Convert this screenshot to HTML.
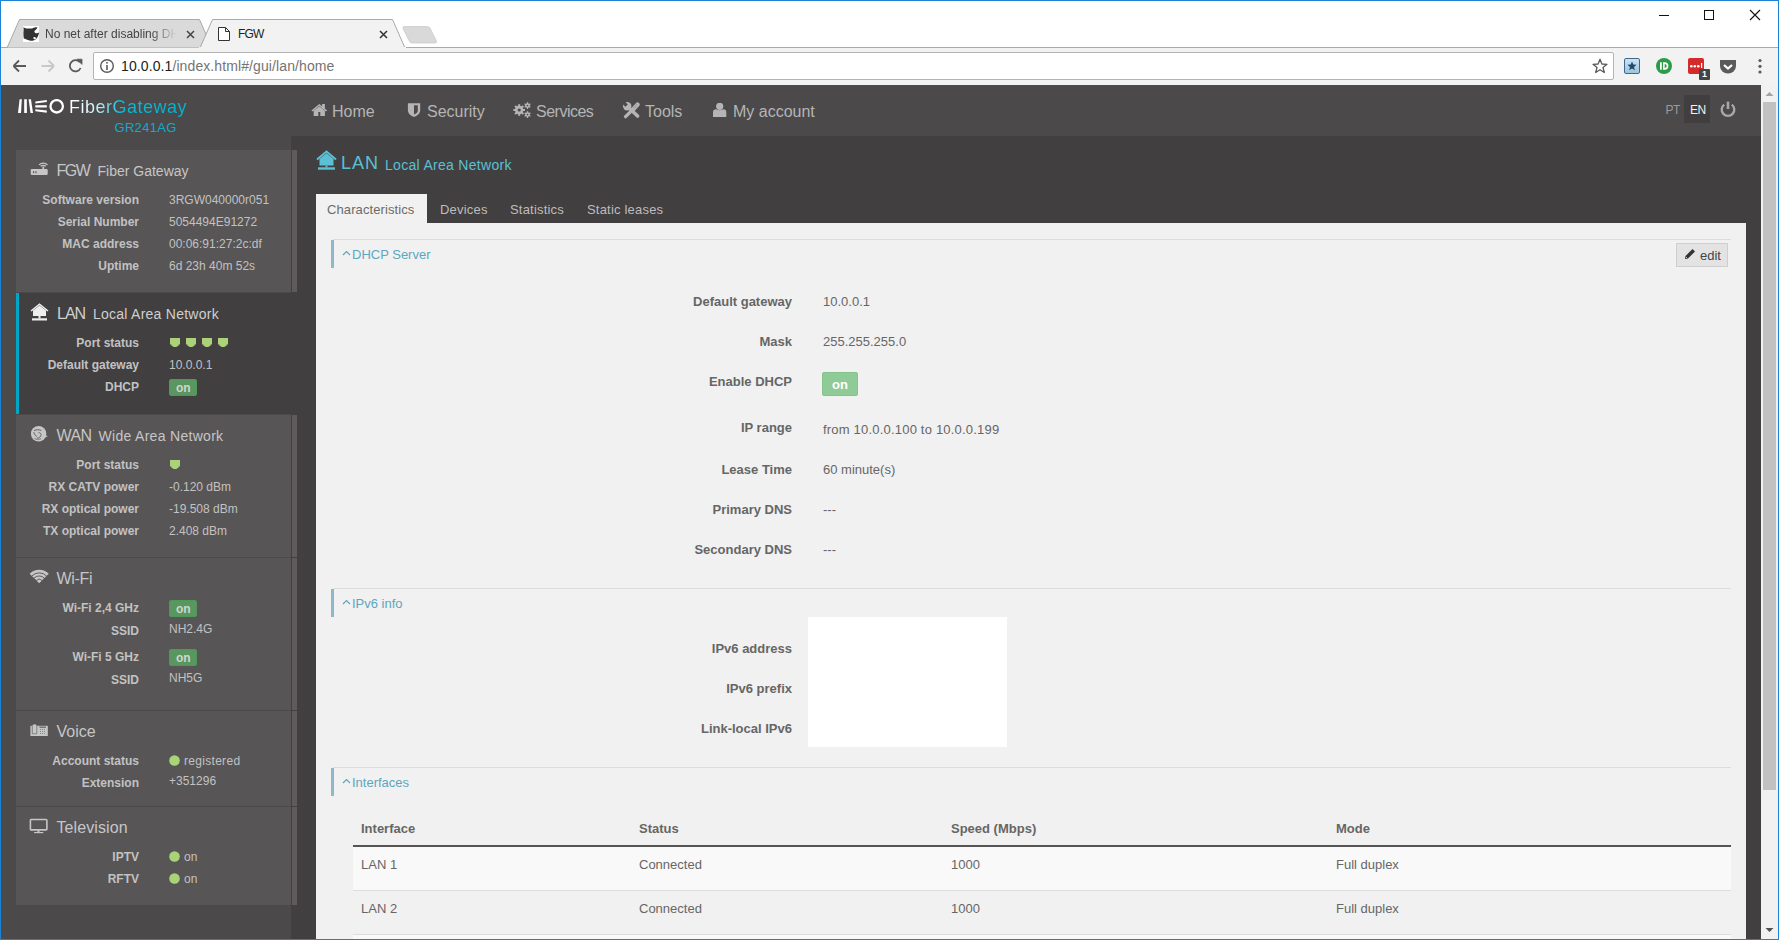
<!DOCTYPE html>
<html><head><meta charset="utf-8"><style>
*{box-sizing:border-box;margin:0;padding:0}
html,body{width:1779px;height:940px;overflow:hidden;background:#fff;font-family:"Liberation Sans",sans-serif;}
.a{position:absolute;white-space:nowrap}
#frame{position:absolute;left:0;top:0;width:1779px;height:940px;border:1px solid #1b82d6;z-index:100;pointer-events:none}
#toolbar{position:absolute;left:1px;top:48px;width:1777px;height:37px;background:#f2f2f2}
#omni{position:absolute;left:93px;top:52px;width:1521px;height:28px;background:#fff;border:1px solid #b4b4b4;border-radius:2px}
</style></head><body>
<div id="frame"></div>
<!-- TAB STRIP -->
<svg class="a" style="left:0;top:0" width="1779" height="49">
  <line x1="1" y1="47.5" x2="1778" y2="47.5" stroke="#a9a9a9" stroke-width="1"/>
  <polygon points="7,48 19.5,19.5 199.5,19.5 212,48" fill="#dadada" stroke="#a9a9a9" stroke-width="1"/>
  <polygon points="200,48 212.5,19.5 392.5,19.5 405,48" fill="#f2f2f2" stroke="#a9a9a9" stroke-width="1"/>
  <rect x="199" y="47" width="207" height="2" fill="#f2f2f2"/>
  <path d="M404,26.5 L427,26.5 Q429,26.5 430,28 L436.5,41 Q437,43 435,43 L412,43 Q410,43 409.5,41.5 L403,28.5 Q402.5,26.5 404,26.5Z" fill="#d9d9d9" stroke="#c2c2c2" stroke-width="0.6"/>
</svg>

<!-- window controls -->
<svg class="a" style="left:1650px;top:5px" width="120" height="20">
  <line x1="9" y1="10.5" x2="19" y2="10.5" stroke="#111" stroke-width="1"/>
  <rect x="54.5" y="5.5" width="9" height="9" fill="none" stroke="#111" stroke-width="1"/>
  <path d="M100,5 L110,15 M110,5 L100,15" stroke="#111" stroke-width="1.1"/>
</svg>

<!-- tab 1 content -->
<div class="a" style="left:23px;top:26px;width:16px;height:16px;background:#fff"><svg width="16" height="16" viewBox="0 0 16 16" style="position:absolute;left:0;top:0;overflow:visible"><path d="M0.3,1.3 C1.5,1.6 2.5,2.3 3.3,2.6 C5.5,2.2 8,2.6 9,2.5 C10.5,1.8 12.5,1.2 14.5,1.3 C14,2.8 13,3.8 11.6,4.8 C11.2,5.6 11.5,6.5 12.3,7 C13.5,7.6 15,7.3 16.2,6.5 C15.5,9 14.8,11 13.3,12.8 C11.8,14.5 9.5,15 7.5,14.8 C5,14.5 3,13.4 1.8,12.6 L0.9,13 C0.6,11 0.3,9 0.4,7 C0.5,4.8 1,3.2 0.3,1.3Z" fill="#333"/><path d="M10.6,11.2 C11.3,10.8 12.3,11.2 13.2,12 C12.8,13.3 11.5,13.7 10.8,13 C10.3,12.4 10.2,11.7 10.6,11.2Z" fill="#fff"/></svg></div>
<div class="a" style="left:45px;top:26px;width:132px;height:16px;overflow:hidden;font-size:12px;line-height:16px;color:#444;-webkit-mask-image:linear-gradient(to right,#000 80%,transparent 100%)">No net after disabling DHCP</div>
<svg class="a" style="left:186px;top:30px" width="9" height="9"><path d="M1,1 L8,8 M8,1 L1,8" stroke="#444" stroke-width="1.5"/></svg>
<!-- tab 2 content -->
<svg class="a" style="left:218px;top:27px" width="12" height="14"><path d="M0.5,0.5 L7.5,0.5 L11.5,4.5 L11.5,13.5 L0.5,13.5Z M7.5,0.5 L7.5,4.5 L11.5,4.5" fill="#fff" stroke="#333" stroke-width="1"/></svg>
<div class="a" style="left:238px;top:26px;font-size:12px;line-height:16px;color:#222;letter-spacing:-0.8px">FGW</div>
<svg class="a" style="left:379px;top:30px" width="9" height="9"><path d="M1,1 L8,8 M8,1 L1,8" stroke="#333" stroke-width="1.5"/></svg>

<div id="toolbar"></div>
<!-- nav buttons -->
<svg class="a" style="left:10px;top:56px" width="80" height="20">
  <path d="M3.5,10 L16,10 M3.5,10 L9,4.5 M3.5,10 L9,15.5" stroke="#5a5a5a" stroke-width="1.8" fill="none"/>
  <path d="M44,10 L31.5,10 M44,10 L38.5,4.5 M44,10 L38.5,15.5" stroke="#c8c8c8" stroke-width="1.8" fill="none"/>
  <path d="M69.8,6.2 A5.6,5.6 0 1 0 70.6,12" stroke="#5a5a5a" stroke-width="1.8" fill="none"/>
  <path d="M66.8,3.2 L72,3.2 L72,8.4Z" fill="#5a5a5a" stroke="#5a5a5a" stroke-width="0.8" stroke-linejoin="round"/>
</svg>
<div id="omni"></div>
<svg class="a" style="left:99px;top:58px" width="16" height="16"><circle cx="8" cy="8" r="6.3" fill="none" stroke="#5a5a5a" stroke-width="1.4"/><rect x="7.2" y="7" width="1.6" height="5" fill="#5a5a5a"/><rect x="7.2" y="4" width="1.6" height="1.6" fill="#5a5a5a"/></svg>
<div class="a" style="left:121px;top:57px;font-size:14px;line-height:18px;color:#222;letter-spacing:0.1px">10.0.0.1<span style="color:#747474">/index.html#/gui/lan/home</span></div>
<svg class="a" style="left:1591px;top:57px" width="18" height="18"><path d="M9,2.2 L10.9,7 L16,7.3 L12,10.5 L13.3,15.5 L9,12.7 L4.7,15.5 L6,10.5 L2,7.3 L7.1,7Z" fill="none" stroke="#5a5a5a" stroke-width="1.3" stroke-linejoin="round"/></svg>
<!-- extensions -->
<div class="a" style="left:1624px;top:58px;width:16px;height:16px;border:1px solid #3a6a92;border-radius:2px;background:linear-gradient(#cfe3f1,#9ec4df)"></div>
<svg class="a" style="left:1626px;top:60px" width="12" height="12"><path d="M6,1.5 L7.3,4.6 L10.6,4.8 L8,7 L8.9,10.3 L6,8.5 L3.1,10.3 L4,7 L1.4,4.8 L4.7,4.6Z" fill="#23496b"/></svg>
<svg class="a" style="left:1656px;top:58px" width="16" height="16"><circle cx="8" cy="8" r="8" fill="#2c9b47"/><rect x="4" y="4.3" width="1.8" height="7.4" fill="#fff"/><path d="M7,4.3 L8.7,4.3 A3.7,3.7 0 0 1 8.7,11.7 L7,11.7Z" fill="#fff"/><path d="M8.7,6 A2,2 0 0 1 8.7,10 L8.7,6Z" fill="#2c9b47"/></svg>
<div class="a" style="left:1688px;top:58px;width:16px;height:16px;background:#d42a2a;border-radius:2px"></div>
<svg class="a" style="left:1688px;top:58px" width="16" height="16"><circle cx="3.3" cy="8.3" r="1.3" fill="#fff"/><circle cx="6.8" cy="8.3" r="1.3" fill="#fff"/><circle cx="10.3" cy="8.3" r="1.3" fill="#fff"/><rect x="13" y="5" width="1.2" height="5" fill="#fff"/></svg>
<div class="a" style="left:1699px;top:69px;width:11px;height:11px;background:#444;border-radius:1px;color:#fff;font-size:9px;line-height:11px;text-align:center;font-weight:700">1</div>
<svg class="a" style="left:1720px;top:59px" width="16" height="15"><path d="M0,1 L16,1 L16,7 A8,7.5 0 0 1 0,7Z" fill="#5a5a5a"/><path d="M4,6 L8,9.5 L12,6" stroke="#fff" stroke-width="2.2" fill="none"/></svg>
<svg class="a" style="left:1756px;top:58px" width="8" height="18"><circle cx="4" cy="2.5" r="1.6" fill="#5a5a5a"/><circle cx="4" cy="8.3" r="1.6" fill="#5a5a5a"/><circle cx="4" cy="14" r="1.6" fill="#5a5a5a"/></svg>


<div class="a" style="left:1px;top:85px;width:1760px;height:51px;background:#4b494a;"></div>
<div class="a" style="left:1px;top:136px;width:290px;height:804px;background:#4b494a;"></div>
<div class="a" style="left:291px;top:136px;width:1470px;height:804px;background:#413f40;"></div>
<div class="a" style="left:1761px;top:85px;width:17px;height:855px;background:#f1f1f1;"></div>
<div class="a" style="left:1763px;top:102px;width:13px;height:688px;background:#c1c1c1;"></div>
<svg class="a" style="left:1761px;top:85px;" width="17" height="17" viewBox="0 0 17 17"><path d="M4.5,11 L8.5,7 L12.5,11Z" fill="#a3a3a3"/></svg>
<svg class="a" style="left:1761px;top:922px;" width="17" height="17" viewBox="0 0 17 17"><path d="M4.5,6 L8.5,10 L12.5,6Z" fill="#505050"/></svg>
<svg class="a" style="left:18px;top:99px;" width="48" height="16" viewBox="0 0 48 16">
<path d="M0,14 L3,14 L3.8,0.3 L1.6,0.3Z" fill="#fff"/>
<path d="M6.2,0.3 L8.8,0.3 L8.9,14 L6.2,14Z" fill="#fff"/>
<path d="M10.6,0.3 L13,0.3 L15,14 L12.5,14Z" fill="#fff"/>
<path d="M17.3,2.4 L28.7,0.9 L28.9,3 L17.4,4.6Z" fill="#fff"/>
<path d="M17.3,6.2 L28.8,6.2 L28.8,8.5 L17.3,8.5Z" fill="#fff"/>
<path d="M17.3,10.2 L28.9,11.5 L28.7,13.8 L17.4,12.3Z" fill="#fff"/>
<circle cx="38.7" cy="7.3" r="6.2" fill="none" stroke="#fff" stroke-width="2.3"/>
</svg>
<div class="a" style="left:69px;top:98px;font-size:18px;line-height:18px;letter-spacing:0.5px;color:#06bad6"><span style="background:linear-gradient(90deg,#ffffff 0px,#e8fcff 18px,#a8ecf4 32px,#3ccde2 45px,#06bad6 52px,#05b2cf 118px);-webkit-background-clip:text;background-clip:text;color:transparent">FiberGateway</span></div>
<div class="a" style="top:121.00px;font-size:13px;line-height:13px;color:#14a9c8;letter-spacing:0.3px;left:114.5px;">GR241AG</div>
<svg class="a" style="left:311px;top:103px;" width="17" height="14" viewBox="0 0 17 14"><path d="M8.3,0.9 L16.2,7.6 L15,8.5 L8.3,2.7 L1.6,8.5 L0.4,7.6Z" fill="#b5b5b5"/><path d="M2.7,7.8 L8.3,3.2 L13.9,7.8 L13.9,13.1 L9.3,13.1 L9.3,8.9 L7.3,8.9 L7.3,13.1 L2.7,13.1Z" fill="#b5b5b5"/><rect x="11.1" y="1" width="2.8" height="4.6" fill="#b5b5b5"/></svg>
<div class="a" style="top:104.00px;font-size:16px;line-height:16px;color:#b5b5b5;left:332px;">Home</div>
<svg class="a" style="left:407px;top:103px;" width="14" height="15" viewBox="0 0 14 15"><path d="M0.9,0.2 L13.2,0.2 L13.2,7.2 C13.2,10.6 10,13 7,14 C4,13 0.9,10.6 0.9,7.2Z" fill="#b5b5b5"/><path d="M7,2.2 L10.8,2.2 L10.8,7.4 C10.8,9.2 9.2,10.6 7,11.6Z" fill="#4b494a"/></svg>
<div class="a" style="top:104.00px;font-size:16px;line-height:16px;color:#b5b5b5;left:427px;">Security</div>
<svg class="a" style="left:512px;top:102px;" width="20" height="17" viewBox="0 0 20 17"><circle cx="7.2" cy="8" r="4.2" fill="#b5b5b5"/><rect x="6.20" y="2.20" width="2.0" height="2.60" fill="#b5b5b5" transform="rotate(0.0 7.2 8)"/><rect x="6.20" y="2.20" width="2.0" height="2.60" fill="#b5b5b5" transform="rotate(45.0 7.2 8)"/><rect x="6.20" y="2.20" width="2.0" height="2.60" fill="#b5b5b5" transform="rotate(90.0 7.2 8)"/><rect x="6.20" y="2.20" width="2.0" height="2.60" fill="#b5b5b5" transform="rotate(135.0 7.2 8)"/><rect x="6.20" y="2.20" width="2.0" height="2.60" fill="#b5b5b5" transform="rotate(180.0 7.2 8)"/><rect x="6.20" y="2.20" width="2.0" height="2.60" fill="#b5b5b5" transform="rotate(225.0 7.2 8)"/><rect x="6.20" y="2.20" width="2.0" height="2.60" fill="#b5b5b5" transform="rotate(270.0 7.2 8)"/><rect x="6.20" y="2.20" width="2.0" height="2.60" fill="#b5b5b5" transform="rotate(315.0 7.2 8)"/><circle cx="7.2" cy="8" r="1.6" fill="#4b494a"/><circle cx="15.5" cy="3.6" r="2.3" fill="#b5b5b5"/><rect x="14.85" y="0.20" width="1.3" height="2.10" fill="#b5b5b5" transform="rotate(0.0 15.5 3.6)"/><rect x="14.85" y="0.20" width="1.3" height="2.10" fill="#b5b5b5" transform="rotate(60.0 15.5 3.6)"/><rect x="14.85" y="0.20" width="1.3" height="2.10" fill="#b5b5b5" transform="rotate(120.0 15.5 3.6)"/><rect x="14.85" y="0.20" width="1.3" height="2.10" fill="#b5b5b5" transform="rotate(180.0 15.5 3.6)"/><rect x="14.85" y="0.20" width="1.3" height="2.10" fill="#b5b5b5" transform="rotate(240.0 15.5 3.6)"/><rect x="14.85" y="0.20" width="1.3" height="2.10" fill="#b5b5b5" transform="rotate(300.0 15.5 3.6)"/><circle cx="15.5" cy="3.6" r="0.8" fill="#4b494a"/><circle cx="15.5" cy="12.6" r="2.3" fill="#b5b5b5"/><rect x="14.85" y="9.20" width="1.3" height="2.10" fill="#b5b5b5" transform="rotate(0.0 15.5 12.6)"/><rect x="14.85" y="9.20" width="1.3" height="2.10" fill="#b5b5b5" transform="rotate(60.0 15.5 12.6)"/><rect x="14.85" y="9.20" width="1.3" height="2.10" fill="#b5b5b5" transform="rotate(120.0 15.5 12.6)"/><rect x="14.85" y="9.20" width="1.3" height="2.10" fill="#b5b5b5" transform="rotate(180.0 15.5 12.6)"/><rect x="14.85" y="9.20" width="1.3" height="2.10" fill="#b5b5b5" transform="rotate(240.0 15.5 12.6)"/><rect x="14.85" y="9.20" width="1.3" height="2.10" fill="#b5b5b5" transform="rotate(300.0 15.5 12.6)"/><circle cx="15.5" cy="12.6" r="0.8" fill="#4b494a"/></svg>
<div class="a" style="top:104.00px;font-size:16px;line-height:16px;color:#b5b5b5;letter-spacing:-0.5px;left:536px;">Services</div>
<svg class="a" style="left:622px;top:101px;" width="19" height="18" viewBox="0 0 19 18"><g stroke="#b5b5b5" stroke-linecap="round" fill="none"><line x1="5.5" y1="5.5" x2="15.6" y2="15" stroke-width="3.6"/><line x1="15.6" y1="3.6" x2="11" y2="8.4" stroke-width="4.4"/><line x1="11" y1="8.4" x2="3.6" y2="15.6" stroke-width="3.4"/></g><circle cx="5.2" cy="5.2" r="4.2" fill="#b5b5b5"/><path d="M0.2,2.6 L2.6,0.2 L5.8,3.4 L3.4,5.8Z" fill="#4b494a"/><g fill="#8a8889"><rect x="12.6" y="4.6" width="0.9" height="0.9"/><rect x="14.2" y="3.2" width="0.9" height="0.9"/><rect x="11.6" y="6.2" width="0.9" height="0.9"/><rect x="13.2" y="5.6" width="0.9" height="0.9"/></g></svg>
<div class="a" style="top:104.00px;font-size:16px;line-height:16px;color:#b5b5b5;left:645px;">Tools</div>
<svg class="a" style="left:713px;top:103px;" width="15" height="15" viewBox="0 0 15 15"><circle cx="6.7" cy="3.3" r="3.6" fill="#b5b5b5"/><path d="M0,13.9 L0,9.2 Q0,6.4 3,6.3 C4.5,7.4 8.9,7.4 10.4,6.3 Q13.3,6.4 13.3,9.2 L13.3,13.9Z" fill="#b5b5b5"/></svg>
<div class="a" style="top:104.00px;font-size:16px;line-height:16px;color:#b5b5b5;left:733px;">My account</div>
<div class="a" style="top:104.00px;font-size:12px;line-height:12px;color:#9a9a9a;letter-spacing:-0.5px;left:1665.5px;">PT</div>
<div class="a" style="left:1684px;top:95px;width:26px;height:28px;background:#403e3f;"></div>
<div class="a" style="top:104.00px;font-size:12px;line-height:12px;color:#f0f0f0;letter-spacing:-0.5px;left:1690px;">EN</div>
<svg class="a" style="left:1719px;top:100px;" width="18" height="18" viewBox="0 0 18 18"><path d="M5.2,4.6 A6.3,6.3 0 1 0 12.8,4.6" fill="none" stroke="#a8a8a8" stroke-width="2.4"/><rect x="7.7" y="1.6" width="2.6" height="7.4" fill="#a8a8a8"/></svg>
<div class="a" style="left:16px;top:150px;width:275px;height:142px;background:#575556;"></div>
<div class="a" style="left:292px;top:150px;width:5px;height:142px;background:#5f5b5c;"></div>
<svg class="a" style="left:30px;top:162px;" width="19" height="14" viewBox="0 0 19 14"><path d="M1.5,7 L16.6,7 Q17.7,7 17.7,8.3 L17.7,11.8 Q17.7,13.1 16.6,13.1 L1.9,13.1 Q0.7,13.1 0.7,11.8 L0.7,8.3 Q0.7,7 1.5,7Z" fill="#c6c6c6"/><rect x="3" y="9.2" width="1.1" height="2" fill="#575556"/><rect x="5.4" y="9.2" width="1.1" height="2" fill="#575556"/><rect x="12.4" y="4.6" width="1.8" height="2.6" fill="#c6c6c6"/><path d="M10.6,4.3 A4.5,4.5 0 0 1 16,4.3" fill="none" stroke="#c6c6c6" stroke-width="1.2"/><path d="M9,2.9 A6,6 0 0 1 17.6,2.9" fill="none" stroke="#c6c6c6" stroke-width="1.2"/></svg>
<div class="a" style="top:163.00px;font-size:16px;line-height:16px;color:#c6c6c6;letter-spacing:-1.5px;left:56.5px;">FGW</div>
<div class="a" style="top:164.00px;font-size:14px;line-height:14px;color:#c6c6c6;left:97.5px;">Fiber Gateway</div>
<div class="a" style="top:194.00px;font-size:12px;line-height:12px;color:#c2c2c2;font-weight:700;right:1640px;">Software version</div>
<div class="a" style="top:194.00px;font-size:12px;line-height:12px;color:#c2c2c2;left:169px;">3RGW040000r051</div>
<div class="a" style="top:216.00px;font-size:12px;line-height:12px;color:#c2c2c2;font-weight:700;right:1640px;">Serial Number</div>
<div class="a" style="top:216.00px;font-size:12px;line-height:12px;color:#c2c2c2;left:169px;">5054494E91272</div>
<div class="a" style="top:238.00px;font-size:12px;line-height:12px;color:#c2c2c2;font-weight:700;right:1640px;">MAC address</div>
<div class="a" style="top:238.00px;font-size:12px;line-height:12px;color:#c2c2c2;left:169px;">00:06:91:27:2c:df</div>
<div class="a" style="top:260.00px;font-size:12px;line-height:12px;color:#c2c2c2;font-weight:700;right:1640px;">Uptime</div>
<div class="a" style="top:260.00px;font-size:12px;line-height:12px;color:#c2c2c2;left:169px;">6d 23h 40m 52s</div>
<div class="a" style="left:16px;top:293px;width:300px;height:121px;background:#413f40;"></div>
<div class="a" style="left:16px;top:293px;width:3px;height:121px;background:#00a6c6;"></div>
<svg class="a" style="left:30px;top:303px;" width="19" height="18" viewBox="0 0 19 18"><path d="M1,8 L9.5,1.2 L18,8" fill="none" stroke="#eeeeee" stroke-width="1.6"/><path d="M3,7.5 L9.5,2.5 L16,7.5 L16,13 L3,13Z" fill="#eeeeee"/><rect x="8.5" y="13" width="2" height="2.5" fill="#eeeeee"/><rect x="2" y="15.3" width="15" height="2.2" fill="#eeeeee"/></svg>
<div class="a" style="top:306.00px;font-size:16px;line-height:16px;color:#cfcfcf;letter-spacing:-1px;left:57px;">LAN</div>
<div class="a" style="top:307.00px;font-size:14px;line-height:14px;color:#cfcfcf;letter-spacing:0.25px;left:93px;">Local Area Network</div>
<div class="a" style="top:337.00px;font-size:12px;line-height:12px;color:#c2c2c2;font-weight:700;right:1640px;">Port status</div>
<svg class="a" style="left:170px;top:338px;" width="10" height="9" viewBox="0 0 10 9"><path d="M0,0 H10 V6.3 L8.6,6.8 L8.4,8 L7,8.2 L6.6,9 L3.4,9 L3,8.2 L1.6,8 L1.4,6.8 L0,6.3Z" fill="#abd279"/></svg>
<svg class="a" style="left:186px;top:338px;" width="10" height="9" viewBox="0 0 10 9"><path d="M0,0 H10 V6.3 L8.6,6.8 L8.4,8 L7,8.2 L6.6,9 L3.4,9 L3,8.2 L1.6,8 L1.4,6.8 L0,6.3Z" fill="#abd279"/></svg>
<svg class="a" style="left:202px;top:338px;" width="10" height="9" viewBox="0 0 10 9"><path d="M0,0 H10 V6.3 L8.6,6.8 L8.4,8 L7,8.2 L6.6,9 L3.4,9 L3,8.2 L1.6,8 L1.4,6.8 L0,6.3Z" fill="#abd279"/></svg>
<svg class="a" style="left:218px;top:338px;" width="10" height="9" viewBox="0 0 10 9"><path d="M0,0 H10 V6.3 L8.6,6.8 L8.4,8 L7,8.2 L6.6,9 L3.4,9 L3,8.2 L1.6,8 L1.4,6.8 L0,6.3Z" fill="#abd279"/></svg>
<div class="a" style="top:359.00px;font-size:12px;line-height:12px;color:#c2c2c2;font-weight:700;right:1640px;">Default gateway</div>
<div class="a" style="top:359.00px;font-size:12px;line-height:12px;color:#c2c2c2;left:169px;">10.0.0.1</div>
<div class="a" style="top:381.00px;font-size:12px;line-height:12px;color:#c2c2c2;font-weight:700;right:1640px;">DHCP</div>
<div class="a" style="left:169px;top:379px;width:28px;height:17px;background:#5a9660;border-radius:2px;border:1px solid #4f9857"></div>
<div class="a" style="top:382.00px;font-size:12px;line-height:12px;color:#cdd8cd;font-weight:700;left:176px;">on</div>
<div class="a" style="left:16px;top:415px;width:275px;height:142px;background:#575556;"></div>
<div class="a" style="left:292px;top:415px;width:5px;height:142px;background:#5f5b5c;"></div>
<svg class="a" style="left:29px;top:424px;" width="20" height="20" viewBox="0 0 20 20"><circle cx="9.6" cy="9.7" r="7.7" fill="#c6c6c6"/><path d="M16.5,11 L18.8,12.3 L16,13.5Z" fill="#c6c6c6"/><path d="M5,6.6 C7,5.6 9.5,5.4 12.3,6.4" fill="none" stroke="#575556" stroke-width="0.9"/><path d="M4.6,8.2 C5.5,10 6.5,11.5 7.6,12.6" fill="none" stroke="#575556" stroke-width="0.9"/><path d="M9.5,8.5 C11.5,8.7 12.5,10 11.8,12 C11,13.5 9.5,14 8,14" fill="none" stroke="#575556" stroke-width="0.8"/><path d="M5.5,14.5 C7,15.5 10,15.5 12,14.8" fill="none" stroke="#575556" stroke-width="0.7"/></svg>
<div class="a" style="top:428.00px;font-size:16px;line-height:16px;color:#c6c6c6;letter-spacing:-0.6px;left:56.5px;">WAN</div>
<div class="a" style="top:429.00px;font-size:14px;line-height:14px;color:#c6c6c6;letter-spacing:0.3px;left:98.5px;">Wide Area Network</div>
<div class="a" style="top:459.00px;font-size:12px;line-height:12px;color:#c2c2c2;font-weight:700;right:1640px;">Port status</div>
<svg class="a" style="left:170px;top:460px;" width="10" height="9" viewBox="0 0 10 9"><path d="M0,0 H10 V6.3 L8.6,6.8 L8.4,8 L7,8.2 L6.6,9 L3.4,9 L3,8.2 L1.6,8 L1.4,6.8 L0,6.3Z" fill="#abd279"/></svg>
<div class="a" style="top:481.00px;font-size:12px;line-height:12px;color:#c2c2c2;font-weight:700;right:1640px;">RX CATV power</div>
<div class="a" style="top:481.00px;font-size:12px;line-height:12px;color:#c2c2c2;left:169px;">-0.120 dBm</div>
<div class="a" style="top:503.00px;font-size:12px;line-height:12px;color:#c2c2c2;font-weight:700;right:1640px;">RX optical power</div>
<div class="a" style="top:503.00px;font-size:12px;line-height:12px;color:#c2c2c2;left:169px;">-19.508 dBm</div>
<div class="a" style="top:525.00px;font-size:12px;line-height:12px;color:#c2c2c2;font-weight:700;right:1640px;">TX optical power</div>
<div class="a" style="top:525.00px;font-size:12px;line-height:12px;color:#c2c2c2;left:169px;">2.408 dBm</div>
<div class="a" style="left:16px;top:558px;width:275px;height:152px;background:#575556;"></div>
<div class="a" style="left:292px;top:558px;width:5px;height:152px;background:#5f5b5c;"></div>
<svg class="a" style="left:29px;top:568px;" width="21" height="17" viewBox="0 0 21 17"><path d="M10.2,15 L0.6,5.8 A13.3,13.3 0 0 1 19.8,5.8Z" fill="#c6c6c6"/><path d="M2.8,8 A10.3,10.3 0 0 1 17.6,8" fill="none" stroke="#575556" stroke-width="0.9"/><path d="M5,10.2 A7.2,7.2 0 0 1 15.4,10.2" fill="none" stroke="#575556" stroke-width="0.9"/><path d="M7.3,12.5 A4.1,4.1 0 0 1 13.1,12.5" fill="none" stroke="#575556" stroke-width="0.9"/><path d="M10.2,15 L7.8,12.8 L12.6,12.8Z" fill="#c6c6c6"/></svg>
<div class="a" style="top:571.00px;font-size:16px;line-height:16px;color:#c6c6c6;letter-spacing:-0.3px;left:56.5px;">Wi-Fi</div>
<div class="a" style="top:602.00px;font-size:12px;line-height:12px;color:#c2c2c2;font-weight:700;right:1640px;">Wi-Fi 2,4 GHz</div>
<div class="a" style="left:169px;top:600px;width:28px;height:17px;background:#5a9660;border-radius:2px;border:1px solid #4f9857"></div>
<div class="a" style="top:603.00px;font-size:12px;line-height:12px;color:#cdd8cd;font-weight:700;left:176px;">on</div>
<div class="a" style="top:625.00px;font-size:12px;line-height:12px;color:#c2c2c2;font-weight:700;right:1640px;">SSID</div>
<div class="a" style="top:623.00px;font-size:12px;line-height:12px;color:#c2c2c2;left:169px;">NH2.4G</div>
<div class="a" style="top:651.00px;font-size:12px;line-height:12px;color:#c2c2c2;font-weight:700;right:1640px;">Wi-Fi 5 GHz</div>
<div class="a" style="left:169px;top:649px;width:28px;height:17px;background:#5a9660;border-radius:2px;border:1px solid #4f9857"></div>
<div class="a" style="top:652.00px;font-size:12px;line-height:12px;color:#cdd8cd;font-weight:700;left:176px;">on</div>
<div class="a" style="top:674.00px;font-size:12px;line-height:12px;color:#c2c2c2;font-weight:700;right:1640px;">SSID</div>
<div class="a" style="top:672.00px;font-size:12px;line-height:12px;color:#c2c2c2;left:169px;">NH5G</div>
<div class="a" style="left:16px;top:711px;width:275px;height:95px;background:#575556;"></div>
<div class="a" style="left:292px;top:711px;width:5px;height:95px;background:#5f5b5c;"></div>
<svg class="a" style="left:30px;top:723px;" width="19" height="14" viewBox="0 0 19 14"><rect x="0.4" y="2.8" width="17.4" height="10.2" fill="#c6c6c6"/><path d="M2.3,10.8 L2.3,2.5 Q2.3,0.9 4.55,0.9 Q6.8,0.9 6.8,2.5 L6.8,10.8Z" fill="#c6c6c6" stroke="#575556" stroke-width="0.6"/><rect x="9.5" y="3.6" width="6.4" height="1.1" fill="#575556"/><g fill="#8a8585"><rect x="10" y="6" width="1" height="1"/><rect x="12" y="6" width="1" height="1"/><rect x="14" y="6" width="1" height="1"/><rect x="10" y="8" width="1" height="1"/><rect x="12" y="8" width="1" height="1"/><rect x="14" y="8" width="1" height="1"/><rect x="10" y="10" width="1" height="1"/><rect x="12" y="10" width="1" height="1"/><rect x="14" y="10" width="1" height="1"/></g></svg>
<div class="a" style="top:724.00px;font-size:16px;line-height:16px;color:#c6c6c6;left:56.5px;">Voice</div>
<div class="a" style="top:755.00px;font-size:12px;line-height:12px;color:#c2c2c2;font-weight:700;right:1640px;">Account status</div>
<svg class="a" style="left:169px;top:755px;" width="11" height="11" viewBox="0 0 11 11"><circle cx="5.5" cy="5.5" r="5.3" fill="#aad377"/></svg>
<div class="a" style="top:755.00px;font-size:12px;line-height:12px;color:#c2c2c2;letter-spacing:0.3px;left:184px;">registered</div>
<div class="a" style="top:777.00px;font-size:12px;line-height:12px;color:#c2c2c2;font-weight:700;right:1640px;">Extension</div>
<div class="a" style="top:775.00px;font-size:12px;line-height:12px;color:#c2c2c2;left:169px;">+351296</div>
<div class="a" style="left:16px;top:807px;width:275px;height:98px;background:#575556;"></div>
<div class="a" style="left:292px;top:807px;width:5px;height:98px;background:#5f5b5c;"></div>
<svg class="a" style="left:29px;top:818px;" width="20" height="16" viewBox="0 0 20 16"><path d="M2,0.8 L17,0.8 Q18.7,0.8 18.7,2.5 L18.7,11 Q18.7,12.8 17,12.8 L2,12.8 Q0.6,12.8 0.6,11 L0.6,2.5 Q0.6,0.8 2,0.8Z M2.2,2.3 L2.2,11 L17.1,11 L17.1,2.3Z" fill="#c6c6c6" fill-rule="evenodd"/><rect x="8.4" y="12.5" width="2.2" height="1.4" fill="#c6c6c6"/><rect x="5.1" y="14" width="9.2" height="1.2" fill="#c6c6c6"/></svg>
<div class="a" style="top:820.00px;font-size:16px;line-height:16px;color:#c6c6c6;letter-spacing:0.1px;left:56.5px;">Television</div>
<div class="a" style="top:851.00px;font-size:12px;line-height:12px;color:#c2c2c2;font-weight:700;right:1640px;">IPTV</div>
<svg class="a" style="left:169px;top:851px;" width="11" height="11" viewBox="0 0 11 11"><circle cx="5.5" cy="5.5" r="5.3" fill="#aad377"/></svg>
<div class="a" style="top:851.00px;font-size:12px;line-height:12px;color:#c2c2c2;left:184px;">on</div>
<div class="a" style="top:873.00px;font-size:12px;line-height:12px;color:#c2c2c2;font-weight:700;right:1640px;">RFTV</div>
<svg class="a" style="left:169px;top:873px;" width="11" height="11" viewBox="0 0 11 11"><circle cx="5.5" cy="5.5" r="5.3" fill="#aad377"/></svg>
<div class="a" style="top:873.00px;font-size:12px;line-height:12px;color:#c2c2c2;left:184px;">on</div>
<svg class="a" style="left:316px;top:150px;" width="21" height="21" viewBox="0 0 21 21"><path d="M1,9.5 L10.5,1.5 L20,9.5" fill="none" stroke="#5bc0d4" stroke-width="2"/><path d="M3.5,9 L10.5,3.2 L17.5,9 L17.5,15.5 L3.5,15.5Z" fill="#5bc0d4"/><rect x="9.5" y="15.5" width="2" height="2" fill="#5bc0d4"/><rect x="2" y="17.3" width="17" height="2.4" fill="#5bc0d4"/></svg>
<div class="a" style="top:154.00px;font-size:18px;line-height:18px;color:#5bc0d4;letter-spacing:1px;left:341px;">LAN</div>
<div class="a" style="top:158.00px;font-size:14px;line-height:14px;color:#5bc0d4;letter-spacing:0.3px;left:385px;">Local Area Network</div>
<div class="a" style="left:316px;top:194px;width:111px;height:29px;background:#f1f1f1;"></div>
<div class="a" style="top:203.00px;font-size:13px;line-height:13px;color:#6b6b6b;letter-spacing:0.1px;left:327px;">Characteristics</div>
<div class="a" style="top:203.00px;font-size:13px;line-height:13px;color:#bdbdbd;letter-spacing:0.2px;left:440px;">Devices</div>
<div class="a" style="top:203.00px;font-size:13px;line-height:13px;color:#bdbdbd;letter-spacing:0.2px;left:510px;">Statistics</div>
<div class="a" style="top:203.00px;font-size:13px;line-height:13px;color:#bdbdbd;letter-spacing:0.2px;left:587px;">Static leases</div>
<div class="a" style="left:316px;top:223px;width:1430px;height:717px;background:#f1f1f1;"></div>
<div class="a" style="left:333px;top:239px;width:1398px;height:1px;background:#dcdcdc;"></div>
<div class="a" style="left:331px;top:240px;width:3px;height:28px;background:#8fb9c8;"></div>
<svg class="a" style="left:342px;top:250px;" width="9" height="6" viewBox="0 0 9 6"><path d="M1,5 L4.5,1.5 L8,5" fill="none" stroke="#5ea6c0" stroke-width="1.2"/></svg>
<div class="a" style="top:248.00px;font-size:13px;line-height:13px;color:#5ea6c0;left:352px;">DHCP Server</div>
<div class="a" style="left:1676px;top:243px;width:52px;height:24px;background:#e3e3e3;border:1px solid #cfcfcf"></div>
<svg class="a" style="left:1684px;top:248px;" width="12" height="12" viewBox="0 0 12 12"><path d="M1,11 L1.5,8 L8.5,1 L11,3.5 L4,10.5Z" fill="#333"/><path d="M2,9 L3,10" stroke="#e3e3e3" stroke-width="0.8"/></svg>
<div class="a" style="top:249.00px;font-size:13px;line-height:13px;color:#444;left:1700px;">edit</div>
<div class="a" style="top:295.00px;font-size:13px;line-height:13px;color:#666666;font-weight:700;right:987px;">Default gateway</div>
<div class="a" style="top:295.00px;font-size:13px;line-height:13px;color:#666666;left:823px;">10.0.0.1</div>
<div class="a" style="top:335.00px;font-size:13px;line-height:13px;color:#666666;font-weight:700;right:987px;">Mask</div>
<div class="a" style="top:335.00px;font-size:13px;line-height:13px;color:#666666;left:823px;">255.255.255.0</div>
<div class="a" style="top:375.00px;font-size:13px;line-height:13px;color:#666666;font-weight:700;right:987px;">Enable DHCP</div>
<div class="a" style="left:822px;top:372px;width:36px;height:24px;background:#8fcb96;border-radius:2px;border:1px solid #84c48b"></div>
<div class="a" style="top:378.00px;font-size:13px;line-height:13px;color:#ffffff;font-weight:700;left:832px;">on</div>
<div class="a" style="top:421.00px;font-size:13px;line-height:13px;color:#666666;font-weight:700;right:987px;">IP range</div>
<div class="a" style="top:423.00px;font-size:13px;line-height:13px;color:#666666;letter-spacing:0.2px;left:823px;">from 10.0.0.100 to 10.0.0.199</div>
<div class="a" style="top:463.00px;font-size:13px;line-height:13px;color:#666666;font-weight:700;right:987px;">Lease Time</div>
<div class="a" style="top:463.00px;font-size:13px;line-height:13px;color:#666666;left:823px;">60 minute(s)</div>
<div class="a" style="top:503.00px;font-size:13px;line-height:13px;color:#666666;font-weight:700;right:987px;">Primary DNS</div>
<div class="a" style="top:503.00px;font-size:13px;line-height:13px;color:#666666;left:823px;">---</div>
<div class="a" style="top:543.00px;font-size:13px;line-height:13px;color:#666666;font-weight:700;right:987px;">Secondary DNS</div>
<div class="a" style="top:543.00px;font-size:13px;line-height:13px;color:#666666;left:823px;">---</div>
<div class="a" style="left:333px;top:588px;width:1398px;height:1px;background:#dcdcdc;"></div>
<div class="a" style="left:331px;top:589px;width:3px;height:28px;background:#8fb9c8;"></div>
<svg class="a" style="left:342px;top:599px;" width="9" height="6" viewBox="0 0 9 6"><path d="M1,5 L4.5,1.5 L8,5" fill="none" stroke="#5ea6c0" stroke-width="1.2"/></svg>
<div class="a" style="top:597.00px;font-size:13px;line-height:13px;color:#5ea6c0;left:352px;">IPv6 info</div>
<div class="a" style="left:808px;top:617px;width:199px;height:130px;background:#ffffff;"></div>
<div class="a" style="top:642.00px;font-size:13px;line-height:13px;color:#666666;font-weight:700;right:987px;">IPv6 address</div>
<div class="a" style="top:682.00px;font-size:13px;line-height:13px;color:#666666;font-weight:700;right:987px;">IPv6 prefix</div>
<div class="a" style="top:722.00px;font-size:13px;line-height:13px;color:#666666;font-weight:700;right:987px;">Link-local IPv6</div>
<div class="a" style="left:333px;top:767px;width:1398px;height:1px;background:#dcdcdc;"></div>
<div class="a" style="left:331px;top:768px;width:3px;height:28px;background:#8fb9c8;"></div>
<svg class="a" style="left:342px;top:778px;" width="9" height="6" viewBox="0 0 9 6"><path d="M1,5 L4.5,1.5 L8,5" fill="none" stroke="#5ea6c0" stroke-width="1.2"/></svg>
<div class="a" style="top:776.00px;font-size:13px;line-height:13px;color:#5ea6c0;left:352px;">Interfaces</div>
<div class="a" style="top:822.00px;font-size:13px;line-height:13px;color:#666666;font-weight:700;left:361px;">Interface</div>
<div class="a" style="top:822.00px;font-size:13px;line-height:13px;color:#666666;font-weight:700;left:639px;">Status</div>
<div class="a" style="top:822.00px;font-size:13px;line-height:13px;color:#666666;font-weight:700;left:951px;">Speed (Mbps)</div>
<div class="a" style="top:822.00px;font-size:13px;line-height:13px;color:#666666;font-weight:700;left:1336px;">Mode</div>
<div class="a" style="left:353px;top:845px;width:1378px;height:2px;background:#555555;"></div>
<div class="a" style="left:353px;top:847px;width:1378px;height:43px;background:#f9f9f9;"></div>
<div class="a" style="left:353px;top:890px;width:1378px;height:1px;background:#dddddd;"></div>
<div class="a" style="left:353px;top:934px;width:1378px;height:1px;background:#dddddd;"></div>
<div class="a" style="left:353px;top:935px;width:1378px;height:5px;background:#f9f9f9;"></div>
<div class="a" style="top:858.00px;font-size:13px;line-height:13px;color:#666666;left:361px;">LAN 1</div>
<div class="a" style="top:858.00px;font-size:13px;line-height:13px;color:#666666;left:639px;">Connected</div>
<div class="a" style="top:858.00px;font-size:13px;line-height:13px;color:#666666;left:951px;">1000</div>
<div class="a" style="top:858.00px;font-size:13px;line-height:13px;color:#666666;left:1336px;">Full duplex</div>
<div class="a" style="top:902.00px;font-size:13px;line-height:13px;color:#666666;left:361px;">LAN 2</div>
<div class="a" style="top:902.00px;font-size:13px;line-height:13px;color:#666666;left:639px;">Connected</div>
<div class="a" style="top:902.00px;font-size:13px;line-height:13px;color:#666666;left:951px;">1000</div>
<div class="a" style="top:902.00px;font-size:13px;line-height:13px;color:#666666;left:1336px;">Full duplex</div>
</body></html>
